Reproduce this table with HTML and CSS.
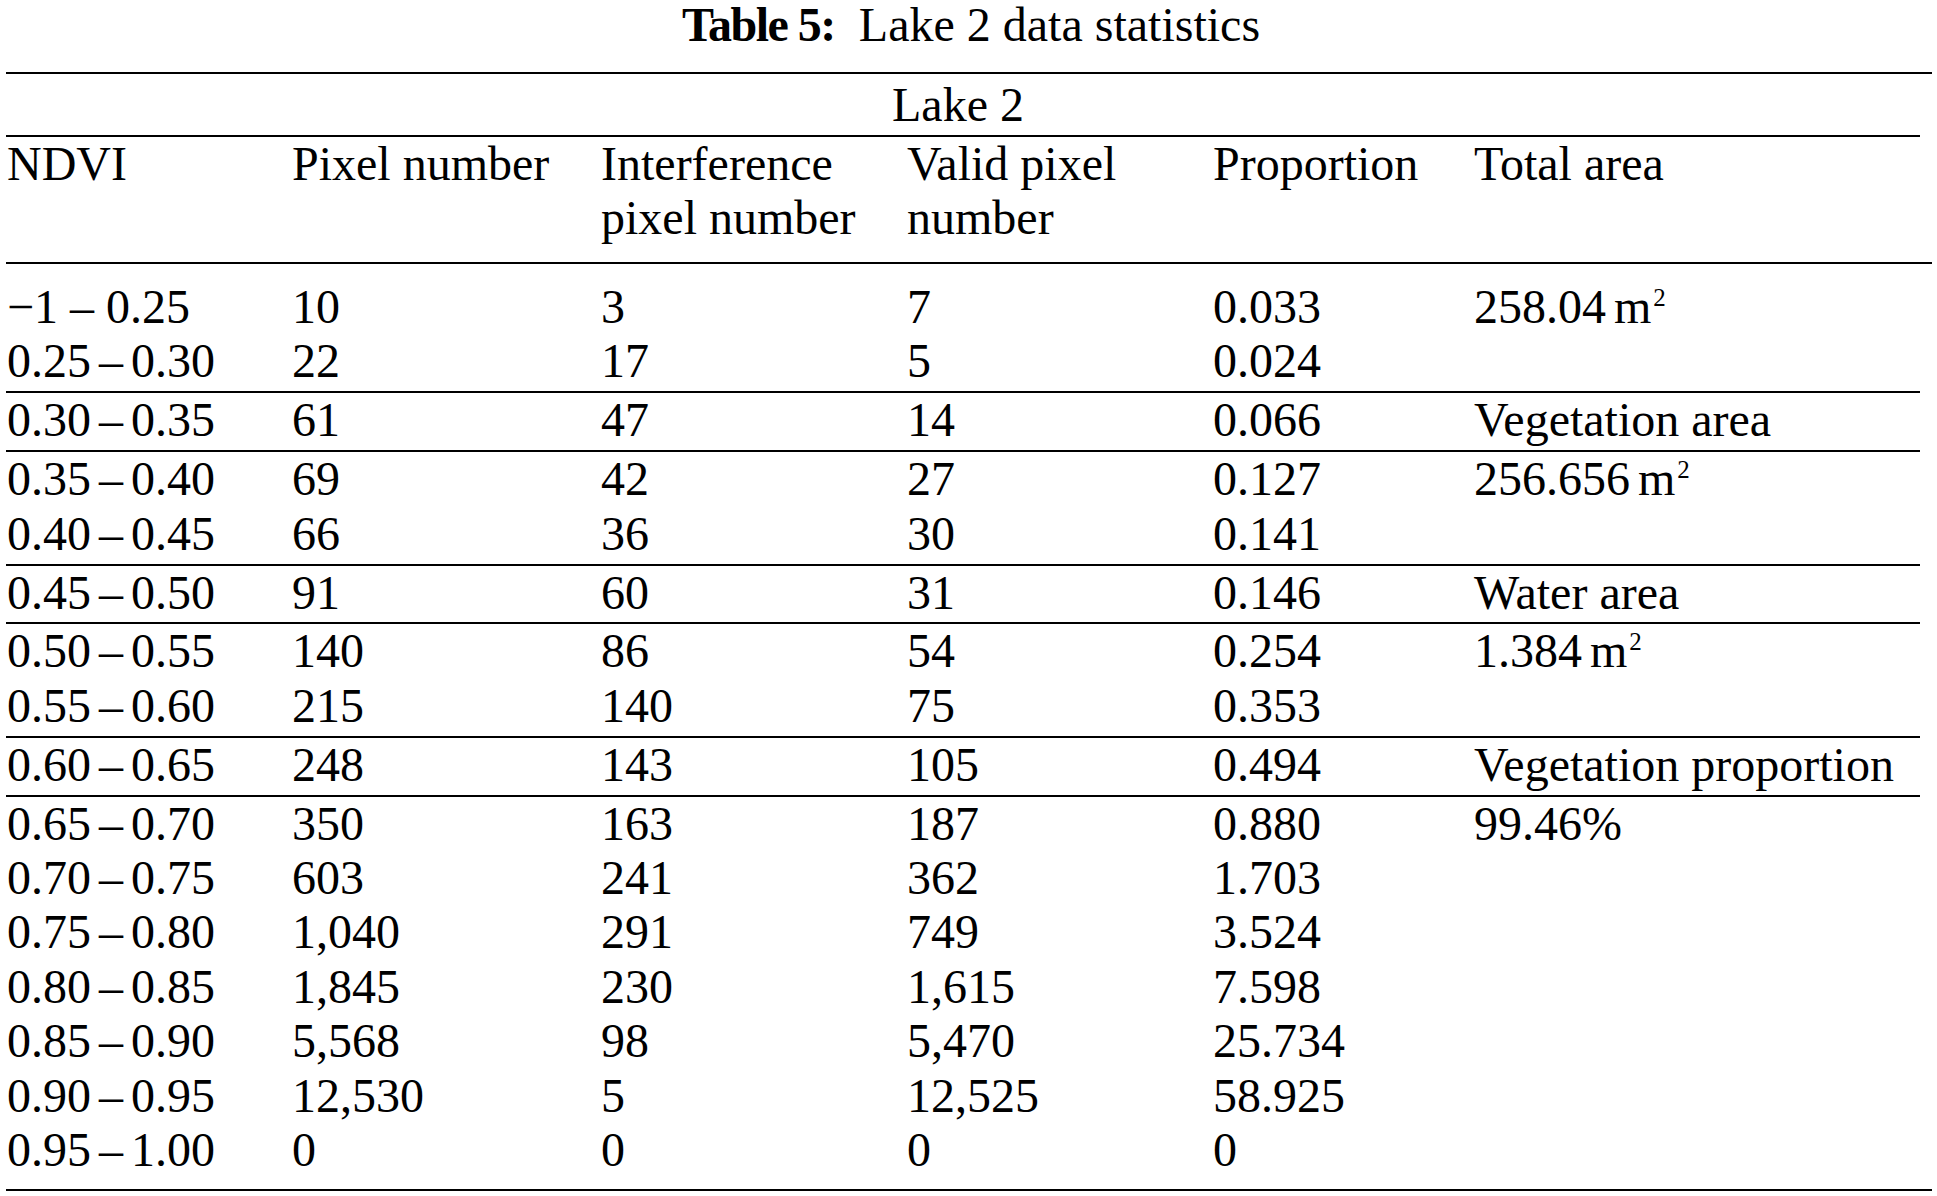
FILE: index.html
```html
<!DOCTYPE html>
<html>
<head>
<meta charset="utf-8">
<link rel="stylesheet" href="styles.css">
</head>
<body>
<div class="page">
  <div class="title"><b>Table 5:</b>&nbsp; Lake 2 data statistics</div>
  <div class="tbl">
    <div class="rule full"></div>
    <div class="lake">Lake 2</div>
    <div class="rule inner"></div>
    <div class="row head">
      <div>NDVI</div>
      <div>Pixel number</div>
      <div>Interference<br>pixel number</div>
      <div>Valid pixel<br>number</div>
      <div>Proportion</div>
      <div>Total area</div>
    </div>
    <div class="rule full"></div>

    <div class="group first">
      <div class="row"><div>&minus;1<span class="d wide">–</span>0.25</div><div>10</div><div>3</div><div>7</div><div>0.033</div><div>258.04<span class="u">m<sup>2</sup></span></div></div>
      <div class="row"><div>0.25<span class="d">–</span>0.30</div><div>22</div><div>17</div><div>5</div><div>0.024</div><div></div></div>
    </div>
    <div class="group">
      <div class="row"><div>0.30<span class="d">–</span>0.35</div><div>61</div><div>47</div><div>14</div><div>0.066</div><div>Vegetation area</div></div>
    </div>
    <div class="group">
      <div class="row"><div>0.35<span class="d">–</span>0.40</div><div>69</div><div>42</div><div>27</div><div>0.127</div><div>256.656<span class="u">m<sup>2</sup></span></div></div>
      <div class="row"><div>0.40<span class="d">–</span>0.45</div><div>66</div><div>36</div><div>30</div><div>0.141</div><div></div></div>
    </div>
    <div class="group">
      <div class="row"><div>0.45<span class="d">–</span>0.50</div><div>91</div><div>60</div><div>31</div><div>0.146</div><div>Water area</div></div>
    </div>
    <div class="group">
      <div class="row"><div>0.50<span class="d">–</span>0.55</div><div>140</div><div>86</div><div>54</div><div>0.254</div><div>1.384<span class="u">m<sup>2</sup></span></div></div>
      <div class="row"><div>0.55<span class="d">–</span>0.60</div><div>215</div><div>140</div><div>75</div><div>0.353</div><div></div></div>
    </div>
    <div class="group">
      <div class="row"><div>0.60<span class="d">–</span>0.65</div><div>248</div><div>143</div><div>105</div><div>0.494</div><div>Vegetation proportion</div></div>
    </div>
    <div class="group last">
      <div class="row"><div>0.65<span class="d">–</span>0.70</div><div>350</div><div>163</div><div>187</div><div>0.880</div><div>99.46%</div></div>
      <div class="row"><div>0.70<span class="d">–</span>0.75</div><div>603</div><div>241</div><div>362</div><div>1.703</div><div></div></div>
      <div class="row"><div>0.75<span class="d">–</span>0.80</div><div>1,040</div><div>291</div><div>749</div><div>3.524</div><div></div></div>
      <div class="row"><div>0.80<span class="d">–</span>0.85</div><div>1,845</div><div>230</div><div>1,615</div><div>7.598</div><div></div></div>
      <div class="row"><div>0.85<span class="d">–</span>0.90</div><div>5,568</div><div>98</div><div>5,470</div><div>25.734</div><div></div></div>
      <div class="row"><div>0.90<span class="d">–</span>0.95</div><div>12,530</div><div>5</div><div>12,525</div><div>58.925</div><div></div></div>
      <div class="row"><div>0.95<span class="d">–</span>1.00</div><div>0</div><div>0</div><div>0</div><div>0</div><div></div></div>
    </div>
    <div class="rule full"></div>
  </div>
</div>
</body>
</html>
```
FILE: styles.css
```css
html, body {
  margin: 0;
  padding: 0;
  background: #ffffff;
}
body {
  font-family: "Liberation Serif", "Times New Roman", serif;
  font-size: 48px;
  color: #000000;
}
.page {
  width: 1937px;
}
.title {
  text-align: center;
  line-height: 50px;
  height: 50px;
  padding-left: 5px;
}
.title b {
  font-weight: bold;
  letter-spacing: -1.5px;
}
.tbl {
  margin-top: 22px;
  margin-left: 6px;
  width: 1926px;
}
.rule {
  height: 2px;
  background: #000000;
}
.rule.inner {
  margin-right: 12px;
}
.lake {
  line-height: 54px;
  padding-top: 4px;
  padding-bottom: 3px;
  text-align: center;
  padding-right: 22px;
}
.row {
  display: grid;
  grid-template-columns: 285px 309px 306px 306px 261px 1fr;
  line-height: 54.4px;
  padding-left: 1px;
  white-space: nowrap;
}
.row.head {
  line-height: 53.5px;
  padding-bottom: 18px;
}
.group {
  border-top: 2px solid #000000;
  margin-right: 12px;
  padding-bottom: 2.5px;
}
.group.first {
  border-top: none;
  padding-top: 16px;
}
.group.last {
  padding-bottom: 11px;
}
.d {
  margin: 0 8px;
}
.d.wide {
  margin: 0 12px;
}
.u {
  margin-left: 8px;
}
.u sup {
  font-size: 25px;
  line-height: 0;
  vertical-align: 17px;
  margin-left: 2px;
}
```
